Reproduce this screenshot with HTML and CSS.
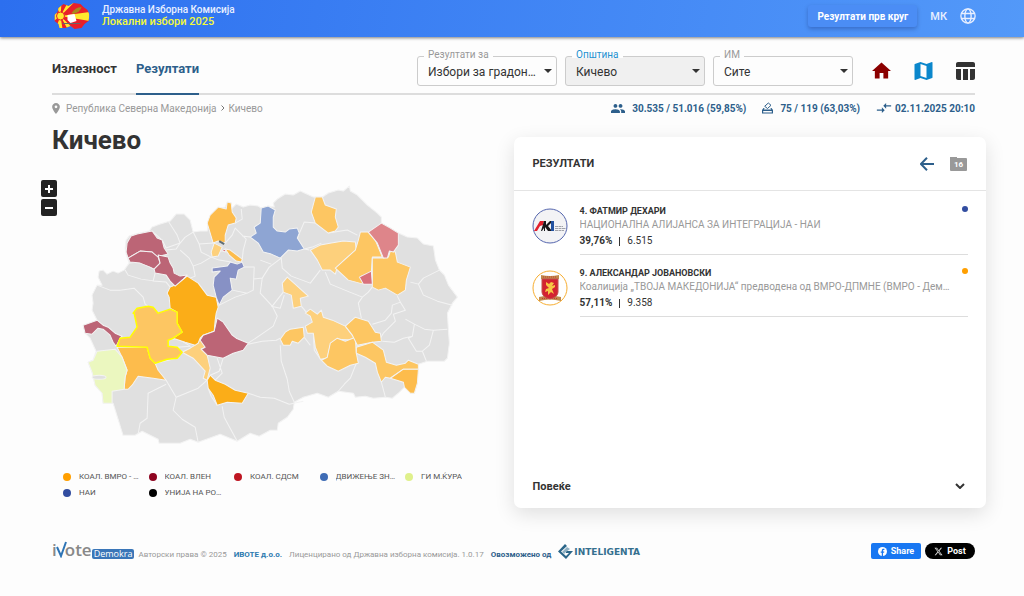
FILE: index.html
```html
<!DOCTYPE html>
<html lang="mk">
<head>
  <meta charset="utf-8">
  <meta name="viewport" content="width=device-width, initial-scale=1">
  <title>Локални избори 2025</title>
  <link rel="stylesheet" href="styles.css">
</head>
<body>

<header class="topbar">
  <a class="brand" href="#">
    <svg class="brand-logo" viewBox="0 0 36 26">
      <clipPath id="flag"><path d="M1 12L4 9L5 5L10 1L15 3L20 0L27 1L30 4L34 7L36 12L35 18L31 21L28 25L21 26L17 23L12 25L6 25L5 21L1 18Z"/></clipPath>
      <g clip-path="url(#flag)">
        <path fill="#e8202a" d="M0 0h36v26H0z"/>
        <path fill="#ffe92e" d="M7 13L0 8v10zM7 13L2 0h6zM7 13L14 0h6zM7 13L36 9v9zM7 13L20 26h-6zM7 13L2 26h7z"/>
        <circle cx="7" cy="13" r="4" fill="#ffe92e" stroke="#e8202a"/>
      </g>
      <path fill="#fff" d="M14 12l7-1 2 7-6 2-3-3z"/>
      <path fill="#a98a1d" d="M18 10q4-6 10-6-1 5-8 7z"/>
      <path stroke="#666" d="M9 20.5h18"/>
    </svg>
    <span class="brand-text">
      <span>Државна Изборна Комисија</span>
      <span class="brand-title">Локални избори 2025</span>
    </span>
  </a>
  <div class="topbar-actions">
    <button class="round-button">Резултати прв круг</button>
    <button class="lang">МК
      <svg viewBox="0 0 24 24" width="18" height="18"><g fill="none" stroke="currentColor" stroke-width="1.8"><circle cx="12" cy="12" r="9.5"/><ellipse cx="12" cy="12" rx="4.2" ry="9.5"/><path d="M3 8.7h18M3 15.3h18"/></g></svg>
    </button>
  </div>
</header>

<div class="page">
  <div class="toolbar">
    <nav class="tabs">
      <a href="#">Излезност</a>
      <a class="active" href="#">Резултати</a>
    </nav>
    <div class="filters">
      <div class="field">
        <label for="type">Резултати за</label>
        <select id="type"><option>Избори за градоначалник</option></select>
      </div>
      <div class="field selected">
        <label for="municipality">Општина</label>
        <select id="municipality"><option>Кичево</option></select>
      </div>
      <div class="field">
        <label for="station">ИМ</label>
        <select id="station"><option>Сите</option></select>
      </div>
      <div class="views">
        <button class="home" aria-label="Почетна"><svg viewBox="2 3 20 18"><path d="M10 20v-6h4v6h5v-8h3L12 3 2 12h3v8z"/></svg></button>
        <button class="map-view" aria-label="Мапа"><svg viewBox="3 3 18 18"><path d="M20.5 3l-.16.03L15 5.1 9 3 3.36 4.9c-.21.07-.36.25-.36.48V20.5c0 .28.22.5.5.5l.16-.03L9 18.9l6 2.1 5.64-1.9c.21-.07.36-.25.36-.48V3.5c0-.28-.22-.5-.5-.5zM15 19l-6-2.11V5l6 2.11V19z"/></svg></button>
        <button class="table-view" aria-label="Табела"><svg viewBox="3 3 19 18"><path d="M10 10.02h5V21h-5zM17 21h3c1.1 0 2-.9 2-2v-9h-5v11zm3-18H5c-1.1 0-2 .9-2 2v3h19V5c0-1.1-.9-2-2-2zM3 19c0 1.1.9 2 2 2h3V10H3v9z"/></svg></button>
      </div>
    </div>
  </div>

  <div class="info">
    <div class="breadcrumb">
      <svg viewBox="5 2 14 20" width="8" height="11"><path d="M12 2C8.13 2 5 5.13 5 9c0 5.25 7 13 7 13s7-7.75 7-13c0-3.87-3.13-7-7-7zm0 9.500a2.500 2.500 0 1 1 0-5 2.500 2.500 0 0 1 0 5z"/></svg>
      <a href="#">Република Северна Македонија</a>
      <svg class="sep" viewBox="0 0 4 6" width="4" height="6"><path d="M.5.5L3 3 .5 5.500"/></svg>
      <span>Кичево</span>
    </div>
    <div class="stats">
      <span><svg viewBox="1 5 22 14" width="14" height="9"><path d="M16 11c1.660 0 3-1.340 3-3s-1.340-3-3-3-3 1.340-3 3 1.340 3 3 3zM8 11c1.660 0 3-1.340 3-3S9.660 5 8 5 5 6.340 5 8s1.340 3 3 3zm0 2c-2.330 0-7 1.170-7 3.500V19h14v-2.500C15 14.170 10.330 13 8 13zm8 0l-1 .05c1.160.84 2 1.970 2 3.450V19h6v-2.500c0-2.330-4.670-3.500-7-3.500z"/></svg>30.535 / 51.016 (59,85%)</span>
      <span><svg viewBox="0 0 11 12" width="11" height="12"><path d="M1.500 6L0 8v3.500h11V8L9.500 6H8.300l1 1.600H1.700l1-1.600zM1.200 9h8.600v1.400H1.200z" fill-rule="evenodd"/><path class="ballot-paper" d="M6.300 1L9 3.300 5.500 6.500 2.700 4.300z"/></svg>75 / 119 (63,03%)</span>
      <span class="updated"><svg viewBox="1 5 22 14" width="16" height="10"><path d="M9.010 14H2v2h7.010v3L13 15l-3.990-4zM14.990 13v-3H22V8h-7.010V5L11 9z"/></svg>02.11.2025 20:10</span>
    </div>
  </div>

  <main class="content">
    <section class="map-panel">
      <h1>Кичево</h1>
      <div class="map">
        <div class="zoom">
          <button aria-label="Зголеми"><svg viewBox="0 0 16 16"><path d="M4 8h8M8 4v8"/></svg></button>
          <button aria-label="Намали"><svg viewBox="0 0 16 16"><path d="M4 8h8"/></svg></button>
        </div>
        <svg class="municipalities" viewBox="41 160 472 308">
          <path class="land" d="M98 277L99 271L103 270L107 274L113 271L118 273L124 270L129 263L126 254L125 248L126 240L129 236L135 234L149 231L152 227L160 224L170 221L176 214L184 214L190 220L193 232L200 231L207 231L208 224L211 215L217 209L225 207L227 202L231 203L231 209L236 204L243 207L250 205L258 206L261 208L268 206L274 207L273 203L277 199L285 194L293 195L300 191L313 197L322 197L328 193L338 190L343 191L349 186L350 191L357 195L367 205L377 213L381 217L381 223L390 228L398 233L407 237L417 238L423 244L433 246L435 260L439 270L444 275L448 285L457 297L452 303L447 313L448 330L449 343L447 358L444 361L427 361L418 364L417 383L414 393L410 393L404 387L398 393L392 398L385 397L373 398L365 396L355 397L353 393L338 391L328 397L317 393L303 397L294 402L293 409L287 417L278 423L277 430L270 430L259 436L250 433L237 441L220 434L198 442L190 439L180 443L159 443L158 439L142 431L135 435L123 435L113 403L103 403L102 393L95 385L92 372L88 362L93 360L96 351L90 338L85 333L83 325L93 323L97 320L92 310L93 303L92 295L97 285L102 285Z"/>
          <!-- municipality borders -->
          <path class="borders" d="M125 270L128 275L141 279L155 281M97 285L110 290L120 290L134 288L143 297L145 304L148 306M129 263L140 262L154 269M155 273L153 281L166 282L170 287M152 231L162 240L166 248L180 243L177 235L168 221M180 243L176 249L166 250M193 232L185 237L180 243M193 232L199 244L213 243M199 244L201 252L211 257L219 260L231 262M180 250L189 258L193 266L201 263L211 257M193 266L195 276L190 278M225 243L232 235L235 228L246 239L243 250L242 260M235 223L242 219L241 209M242 236L250 237M244 267L254 267L253 290L247 293L232 290M247 293L235 297L219 305M304 249L309 250M304 249L312 247L321 243M297 238L304 222L315 223M328 233L347 230L357 235M281 258L282 268L291 276L310 283L320 270M281 258L269 267L262 278L253 279M260 260L271 264M262 278L260 293L272 306L277 316L273 326L260 335L248 343M272 306L283 292M325 272L330 284L347 291L362 297L368 292L372 287M362 297L358 303L361 318M372 324L385 320L391 313L392 305L400 302L397 296M410 282L418 284L423 278L435 272L439 270M418 284L423 295L437 301L452 305M400 302L405 310L393 314L395 321L383 333L380 338M405 319L414 324L412 336L403 338L394 342L382 341M414 324L424 329L433 330L447 329M412 336L408 338L416 351L422 351L426 361M433 330L429 345L422 351M356 363L350 378L344 384L338 391M381 382L385 397M321 360L314 350L313 333M280 338L276 340L262 341L248 344M280 345L281 361L287 379L289 391L294 402M303 401L289 404L274 398L260 397L248 393M155 363L168 360L176 358M207 380L198 388L176 397L166 380M166 384L148 393L147 418L140 423L138 434M176 397L173 410L182 419L195 427L198 442M208 388L211 396L217 405M222 406L224 417L237 441M223 358L219 371L210 375M217 358L222 373L215 380M301 306L306 312M310 345L304 337M284 295L280 308L271 306M168 340L177 338L190 346L177 347L168 346"/>
          <g class="light-orange">
            <path d="M200 338L205 347L201 349L207 355L210 368L207 380L203 378L205 371L193 358L182 352L190 348L198 343Z"/>
            <path d="M214 243L222 247L218 256L212 257L211 252Z"/>
            <path d="M310 250L320 245L331 243L343 241L355 242L356 250L345 259L337 267L335 274L330 270L322 270L317 260Z"/>
            <path d="M282 283L287 277L297 286L308 296L300 298L301 306L293 308L291 295L283 292Z"/>
            <path d="M305 313L310 309L317 314L321 310L323 317L332 320L345 326L352 335L356 340L337 339L330 345L327 358L320 359L315 347L313 333L307 333L305 326L312 322L310 316Z"/>
          </g>
          <g class="orange">
            <path d="M315 197L322 197L325 205L336 209L335 217L338 227L335 231L328 233L315 223L311 212Z"/>
            <path d="M360 232L368 232L375 240L382 257L372 257L371 272L361 276L363 284L348 280L335 268L345 259L355 250L358 240Z"/>
            <path d="M372 258L383 258L388 257L390 251L395 252L397 262L410 267L406 280L405 290L397 295L385 288L378 290L372 287Z"/>
            <path d="M280 339L285 332L290 329L303 327L304 337L298 343L292 341L290 345L283 345Z"/>
            <path d="M330 343L337 338L345 341L355 337L356 353L358 363L350 365L338 371L327 366L321 360L327 357Z"/>
            <path d="M345 326L355 317L368 321L375 332L380 333L381 341L372 342L357 345L352 335Z"/>
            <path d="M356 347L372 342L383 350L386 362L396 365L405 363L408 360L418 364L418 369L403 369L390 378L385 377L381 382L377 372L375 363L365 357L356 353Z"/>
          </g>
          <g class="mid-orange">
            <path d="M207 223L210 215L218 207L226 209L227 202L231 203L232 212L236 218L235 223L228 225L225 235L225 243L218 241L213 243L210 233Z"/>
            <path d="M225 249L230 250L242 259L241 262L236 261L229 255Z"/>
            <path d="M117 347L147 347L150 358L155 363L158 370L166 380L153 378L138 376L132 385L128 389L124 389L125 377L127 370L122 357Z"/>
            <path d="M390 378L403 369L418 369L417 383L414 393L410 393L404 387L403 382Z"/>
          </g>
          <g class="dark-orange">
            <path d="M187 276L198 283L207 295L216 297L218 307L216 313L215 320L214 331L203 335L200 338L198 343L195 345L185 342L173 338L182 332L177 323L177 312L170 308L169 297L167 293L170 287L177 284Z"/>
            <path d="M210 375L215 380L225 384L235 390L248 393L242 403L227 402L217 405L213 395L208 388L207 380Z"/>
          </g>
          <g class="wine">
            <path d="M127 243L131 236L137 234L152 231L157 238L162 240L164 248L168 254L160 256L156 257L152 252L140 251L128 258L126 252Z"/>
            <path d="M128 258L140 251L152 252L158 257L160 263L154 269L150 267L140 263L130 262Z"/>
            <path d="M158 255L168 257L170 263L173 268L174 273L180 276L187 275L183 279L175 286L170 281L166 275L155 273L154 269L160 263Z"/>
            <path d="M217 318L223 322L232 335L236 338L248 343L243 350L233 353L223 358L207 355L201 349L205 347L200 340L203 335L214 331Z"/>
            <path d="M83 325L97 320L103 325L108 327L115 333L122 336L120 338L116 346L113 342L110 335L103 329L98 328L92 334L85 333Z"/>
          </g>
          <path class="red" d="M359 277L371 271L372 284L363 284Z"/>
          <path class="red" d="M221 251L225 249L226 252Z"/>
          <path class="pink" d="M368 232L381 223L390 228L398 233L398 245L393 252L389 251L387 258L383 258L377 243Z"/>
          <path class="indigo" d="M212 268L227 266L230 262L237 264L242 262L244 267L238 270L236 279L230 278L232 290L223 297L219 305L216 297L213 285L214 277L220 271L212 272Z"/>
          <path class="blue" d="M261 208L268 206L275 210L273 217L273 227L277 231L285 232L289 229L297 228L299 233L297 238L304 249L297 251L288 250L280 258L271 254L263 252L258 243L250 237L256 233L254 227L260 223Z"/>
          <path class="lime" d="M97 351L115 349L122 357L127 370L125 377L124 389L112 391L112 403L103 403L102 393L95 385L92 372L88 362L93 360Z"/>
          <ellipse class="lake" cx="99" cy="377" rx="7" ry="2"/>
          <path class="streak" d="M219 241L224 244"/>
          <path class="current" d="M133 313L137 308L148 306L153 307L158 313L170 309L177 312L177 323L182 332L173 338L168 340L168 346L177 347L182 352L177 358L167 359L155 363L150 358L147 347L117 346L120 338L130 337L137 327L134 313Z"/>
        </svg>
      </div>
      <ul class="legend">
        <li class="c-orange"><span>КОАЛ. ВМРО - ДПМНЕ</span></li>
        <li class="c-wine"><span>КОАЛ. ВЛЕН</span></li>
        <li class="c-red"><span>КОАЛ. СДСМ</span></li>
        <li class="c-blue"><span>ДВИЖЕЊЕ ЗНАМ</span></li>
        <li class="c-lime"><span>ГИ М.ЌУРА</span></li>
        <li class="c-indigo"><span>НАИ</span></li>
        <li class="c-black"><span>УНИЈА НА РОМИ</span></li>
      </ul>
    </section>

    <section class="card">
      <div class="card-header">
        <h2>РЕЗУЛТАТИ</h2>
        <button class="back" aria-label="Назад"><svg viewBox="0 0 14 14" width="14" height="14"><path d="M14 7H1M7 .7L.9 7 7 13.300"/></svg></button>
        <button class="count"><span>16</span></button>
      </div>
      <ul class="results">
        <li>
          <svg class="avatar" viewBox="0 0 36 36">
            <circle cx="18" cy="18" r="17" fill="#f3f3f5" stroke="#5566ae"/>
            <path fill="#e21f2d" d="M2 23L8 13h4l-1 4-3 1-3 5z"/>
            <path fill="#19191d" d="M9 23l3-10h2v4l4-4h3l-5 5 4 5h-4l-3-4v4h-1v-3l-2 3z"/>
            <path fill="#2352a0" d="M19 13h3v10h-3z"/>
            <path stroke="#a0a2aa" stroke-dasharray="3 .5" d="M23 18.500h8M23 20.500h11M23 22.500h9"/>
          </svg>
          <div class="result">
            <h3>4. ФАТМИР ДЕХАРИ</h3>
            <p class="party">НАЦИОНАЛНА АЛИЈАНСА ЗА ИНТЕГРАЦИЈА - НАИ</p>
            <p class="votes"><b>39,76%</b><i></i>6.515</p>
          </div>
          <span class="dot dot-indigo"></span>
        </li>
        <li>
          <svg class="avatar" viewBox="0 0 36 36">
            <circle cx="18" cy="18" r="17" fill="#fff" stroke="#f7ae31"/>
            <path fill="#c08a4c" d="M9 5q9 2 18 0v4H9zM7 27q11-3 22 0v4q-11-3-22 0z"/>
            <path stroke="#c63b32" stroke-dasharray="1 1" d="M11 7h14M10 28.500h16"/>
            <path fill="#d32231" stroke="#c0504c" d="M10 9h16v13q0 5-8 7-8-2-8-7z"/>
            <path fill="#f7c645" d="M14 12l3 2 2-2 3 1-2 3 3-1v2l-3 2 2 5-3-2-3 3v-4l-3 1 1-3 3-1-3-3z"/>
          </svg>
          <div class="result">
            <h3>9. АЛЕКСАНДАР ЈОВАНОВСКИ</h3>
            <p class="party">Коалиција „ТВОЈА МАКЕДОНИЈА“ предводена од ВМРО-ДПМНЕ (ВМРО - Демократска партија)</p>
            <p class="votes"><b>57,11%</b><i></i>9.358</p>
          </div>
          <span class="dot dot-orange"></span>
        </li>
      </ul>
      <button class="more">Повеќе
        <svg viewBox="0 0 10 6" width="10" height="6"><path d="M1 1l4 4 4-4"/></svg>
      </button>
    </section>
  </main>

  <footer>
    <a class="ivote" href="#"><span class="ivote-name">i<svg viewBox="0 0 11 17" width="11" height="17"><path d="M1 6l4 9L10 1"/></svg>ote</span><span class="ivote-tag">Demokra</span></a>
    <span>Авторски права © 2025</span>
    <a class="link" href="#">ИВОТЕ д.о.о.</a>
    <span>Лиценцирано од Државна изборна комисија. 1.0.17</span>
    <a class="powered" href="#">Овозможено од</a>
    <a class="inteligenta" href="#"><svg viewBox="0 0 15 15" width="15" height="15"><path fill="#2b6689" d="M7 0l2 2-6 5.500L8 12l3-3H8V7h7l-7 8L0 7.500z"/><path fill="#8fb0c2" d="M9 3l3 2-4 3-2 2-2-2z"/></svg>INTELIGENTA</a>
    <div class="social">
      <button class="share"><svg viewBox="0 0 10 10" width="9" height="9"><circle cx="5" cy="5" r="5" fill="#fff"/><path fill="#1877f2" d="M4.200 10V6.400H3V5h1.200V4c0-1.300.7-2 1.900-2h1v1.200h-.7c-.6 0-.8.3-.8.8v1H7L6.800 6.400H5.600V10z"/></svg>Share</button>
      <button class="post"><svg viewBox="0 0 24 24" width="9" height="9"><path fill="#ddd" d="M18.200 2.200h3.300l-7.200 8.300 8.500 11.200h-6.700l-5.200-6.800-6 6.800H1.700l7.700-8.800L1.300 2.200H8l4.700 6.200zm-1.100 17.500h1.800L7.100 4.100h-2z"/></svg>Post</button>
    </div>
  </footer>
</div>

</body>
</html>
```
FILE: styles.css
```css
* {
  box-sizing: border-box;
}

body {
  margin: 0;
  font-family: Roboto, "Noto Sans", sans-serif;
  font-size: 12px;
  color: #333;
  background-color: #fdfdfd;
}

h1, h2, h3, p, ul {
  margin: 0;
  padding: 0;
}

ul {
  list-style: none;
}

a {
  color: inherit;
  text-decoration: none;
}

button {
  padding: 0;
  border: none;
  background: none;
  font-family: inherit;
  color: inherit;
  cursor: pointer;
}

svg {
  display: block;
  flex: none;
}

/* top bar */
.topbar {
  display: flex;
  align-items: center;
  justify-content: space-between;
  height: 37px;
  padding: 0 47px 5px 53px;
  background: linear-gradient(100deg, #2c6fef, #5399f9);
  box-shadow: 0 1px 3px rgba(0, 0, 0, 0.5);
  color: #e8efff;
}

.brand {
  display: flex;
  align-items: center;
  gap: 12px;
}

.brand-logo {
  width: 37px;
  height: 26px;
}

.brand-text {
  display: flex;
  flex-direction: column;
  font-size: 10px;
  font-weight: 500;
  line-height: 12px;
}

.brand-title {
  font-size: 11px;
  color: #f5fa3a;
}

.topbar-actions {
  display: flex;
  align-items: center;
  gap: 13px;
}

.round-button {
  height: 22px;
  padding: 0 9px;
  border-radius: 3px;
  background-color: #4b8df5;
  box-shadow: 0 2px 4px rgba(0, 0, 60, 0.25);
  font-size: 10px;
  font-weight: 700;
  color: #fff;
}

.lang {
  display: flex;
  align-items: center;
  gap: 12px;
  font-size: 11px;
  font-weight: 500;
}

/* tabs and filters */
.page {
  padding: 0 49px 0 52px;
}

.toolbar {
  display: flex;
  justify-content: space-between;
  height: 58px;
  border-bottom: 2px solid #ddd;
}

.tabs {
  display: flex;
  gap: 19px;
}

.tabs a {
  height: 58px;
  line-height: 63px;
  font-size: 13px;
  font-weight: 700;
}

.tabs .active {
  color: #2d5f8b;
  border-bottom: 2px solid #2d5f8b;
}

.filters {
  display: flex;
  align-items: center;
  gap: 8px;
  padding-top: 12px;
}

.field {
  position: relative;
  width: 140px;
}

.field label {
  position: absolute;
  top: -7px;
  left: 7px;
  padding: 0 4px;
  background: linear-gradient(transparent 50%, #fdfdfd 50%, #fdfdfd 75%, transparent 75%);
  font-size: 10px;
  line-height: 12px;
  color: #999;
}

.field select {
  appearance: none;
  display: block;
  width: 100%;
  height: 30px;
  padding: 1px 16px 0 10px;
  border: 1px solid #ccc;
  border-radius: 3px;
  background-color: transparent;
  font-family: inherit;
  font-size: 12px;
  color: #333;
  text-overflow: ellipsis;
}

.field::after {
  content: "";
  position: absolute;
  right: 5px;
  top: 13px;
  border: 4px solid transparent;
  border-top-color: #333;
  border-bottom: none;
  pointer-events: none;
}

.field.selected label {
  color: #2490cf;
}

.field.selected select {
  background-color: #f0f0f0;
}

.views {
  display: flex;
  gap: 23px;
  margin-left: 11px;
}

.views svg {
  width: 19px;
  height: 18px;
  fill: currentColor;
}

.home {
  color: #8b0000;
}

.map-view {
  color: #0b87cc;
}

.table-view {
  color: #333;
}

/* breadcrumb and turnout */
.info {
  display: flex;
  justify-content: space-between;
  align-items: center;
  height: 26px;
}

.info svg {
  fill: currentColor;
}

.breadcrumb {
  display: flex;
  align-items: center;
  gap: 4px;
  font-size: 10px;
  color: #999;
}

.breadcrumb a {
  margin-left: 2px;
}

.info .sep {
  fill: none;
  stroke: #777;
}

.stats,
.stats span {
  display: flex;
  align-items: center;
}

.stats {
  gap: 16px;
  font-size: 10px;
  font-weight: 700;
  color: #2d5f8b;
}

.stats span {
  gap: 7px;
}

.stats .updated {
  gap: 3px;
}

.info .ballot-paper {
  fill: none;
  stroke: #2d5f8b;
}

/* map */
.content {
  display: grid;
  grid-template-columns: minmax(0, 1fr) minmax(0, 1fr);
  margin: 0 -11px;
}

h1 {
  padding-left: 11px;
  font-size: 26px;
  line-height: 39px;
}

.map {
  position: relative;
}

.municipalities {
  width: 100%;
  stroke: #f3f3f3;
  stroke-linejoin: round;
}

.zoom {
  position: absolute;
  left: 0;
  top: 20px;
}

.zoom button {
  display: block;
  width: 16px;
  height: 17px;
  margin-bottom: 2px;
  border-radius: 2px;
  background-color: #222;
}

.zoom svg {
  stroke: #fff;
  stroke-width: 2;
}

.land {
  fill: #e0e0e0;
}

.borders {
  fill: none;
}

.light-orange {
  fill: #fdd07c;
}

.orange {
  fill: #fdc662;
}

.mid-orange {
  fill: #fdbc4c;
}

.dark-orange {
  fill: #fbad18;
}

.wine {
  fill: #bc6576;
}

.red {
  fill: #d9717b;
}

.pink {
  fill: #de858a;
}

.indigo {
  fill: #8791c5;
}

.blue {
  fill: #8ea5d3;
}

.lime {
  fill: #ebf7bf;
}

.lake {
  fill: #e0e0e0;
}

.streak {
  stroke: #626e74;
  stroke-width: 2;
}

.current {
  fill: #fdc662;
  stroke: #ffff00;
  stroke-width: 1.5;
}

.legend {
  display: grid;
  grid-template-columns: repeat(5, minmax(0, 1fr));
  padding: 1px 23px 7px 22px;
  font-size: 8px;
  line-height: 16px;
}

.legend li {
  display: flex;
  align-items: center;
  gap: 8px;
  padding-right: 6px;
}

.legend li::before {
  content: "";
  flex: none;
  width: 8px;
  height: 8px;
  border-radius: 50%;
  background-color: currentColor;
}

.legend span {
  overflow: hidden;
  text-overflow: ellipsis;
  white-space: nowrap;
  color: #555;
}

.c-orange { color: #ff9f00; }
.c-wine { color: #8e0420; }
.c-red { color: #be1622; }
.c-blue { color: #3f6cb5; }
.c-lime { color: #dff08c; }
.c-indigo { color: #324da0; }
.c-black { color: #000; }

/* results card */
.card {
  display: flex;
  flex-direction: column;
  margin-top: 16px;
  border-radius: 7px;
  background-color: #fff;
  box-shadow: 0 6px 20px rgba(0, 0, 0, 0.12);
}

.card-header {
  display: flex;
  align-items: center;
  gap: 16px;
  height: 54px;
  padding: 0 19px;
  border-bottom: 1px solid #e4e4e4;
}

h2 {
  flex: 1;
  font-size: 11px;
  font-weight: 700;
}

.back svg {
  fill: none;
  stroke: #2d5f8b;
  stroke-width: 2;
}

.count {
  width: 17px;
  height: 14px;
  background: linear-gradient(#999, #999) 0 0 / 7px 2px no-repeat;
  padding-top: 1px;
}

.count span {
  display: block;
  border-radius: 1px;
  background-color: #999;
  font-size: 8px;
  font-weight: 700;
  line-height: 13px;
  color: #fff;
}

.results {
  flex: 1;
  padding: 2px 18px;
}

.results li {
  display: flex;
  height: 62px;
}

.avatar {
  width: 36px;
  height: 36px;
  margin: 15px 12px 0 0;
}

.result {
  flex: 1;
  min-width: 0;
  padding-top: 11px;
  border-bottom: 1px solid #ddd;
}

h3 {
  font-size: 9px;
  line-height: 14px;
}

.party {
  overflow: hidden;
  padding-right: 16px;
  text-overflow: ellipsis;
  white-space: nowrap;
  font-size: 10px;
  line-height: 14px;
  color: #999;
}

.votes {
  display: flex;
  align-items: center;
  font-size: 10px;
  line-height: 18px;
}

.votes i {
  width: 1px;
  height: 9px;
  margin: 0 7px;
  background-color: #333;
}

.dot {
  width: 6px;
  height: 6px;
  margin: 13px 0 0 -6px;
  border-radius: 50%;
}

.dot-indigo {
  background-color: #324da0;
}

.dot-orange {
  background-color: #ff9f00;
}

.more {
  display: flex;
  align-items: center;
  justify-content: space-between;
  height: 44px;
  padding: 0 21px 0 19px;
  font-size: 11px;
  font-weight: 700;
}

.more svg {
  fill: none;
  stroke: #333;
  stroke-width: 2;
}

/* footer */
footer {
  display: flex;
  align-items: flex-end;
  gap: 7px;
  padding: 33px 0;
  font-size: 8px;
  line-height: 8px;
  color: #999;
}

.ivote {
  display: flex;
  align-items: flex-end;
  margin-right: -3px;
}

.ivote-name {
  display: flex;
  align-items: flex-end;
  font-family: "Open Sans", sans-serif;
  font-size: 17px;
  font-weight: 600;
  line-height: 18px;
  color: #888;
}

.ivote-name svg {
  margin: 0 -2px 1px -1px;
  fill: none;
  stroke: #2e74b5;
  stroke-width: 2;
}

.ivote-tag {
  padding: 0 2px;
  border-radius: 2px;
  background-color: #3a76b8;
  font-family: "Open Sans", sans-serif;
  font-size: 9px;
  line-height: 10px;
  color: #fff;
}

.link {
  font-weight: 700;
  color: #2d7ab0;
}

.powered {
  font-weight: 700;
  color: #2d5f8b;
}

.inteligenta {
  display: flex;
  align-items: center;
  gap: 1px;
  font-family: "DejaVu Sans", sans-serif;
  font-size: 9px;
  font-weight: 700;
  color: #35708f;
}

.social {
  display: flex;
  gap: 4px;
  margin-left: auto;
}

.social button {
  display: flex;
  align-items: center;
  justify-content: center;
  gap: 4px;
  width: 50px;
  height: 16px;
  font-size: 9px;
  font-weight: 700;
  color: #fff;
}

.share {
  border-radius: 2px;
  background-color: #1877f2;
}

.post {
  border-radius: 8px;
  background-color: #000;
}
```
